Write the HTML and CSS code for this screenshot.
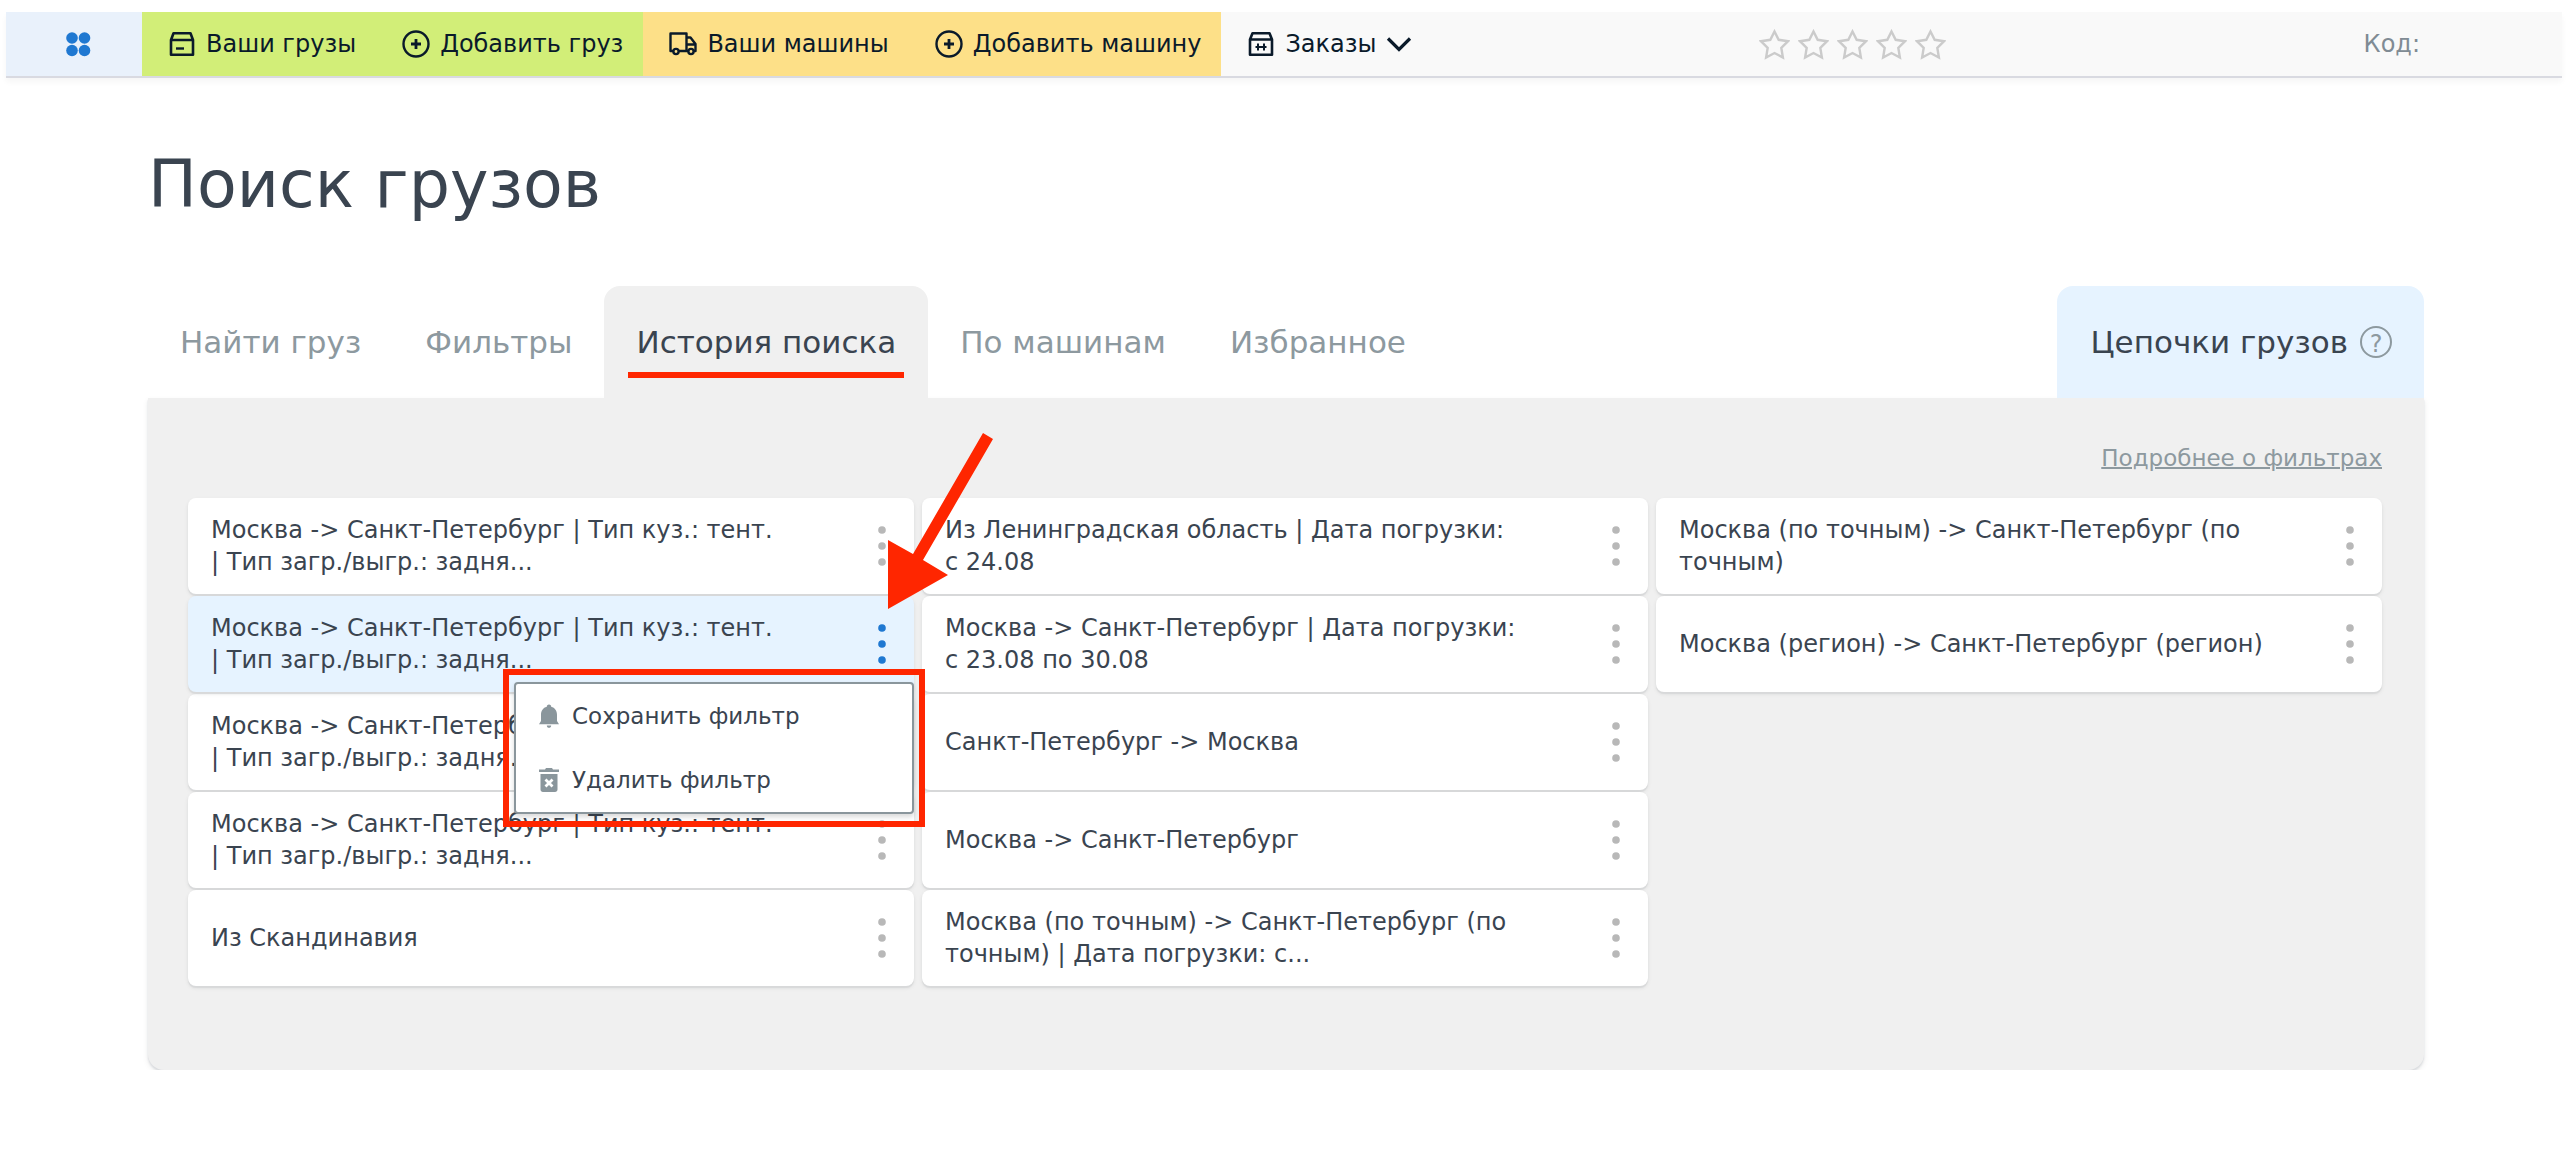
FILE: index.html
```html
<!DOCTYPE html>
<html lang="ru">
<head>
<meta charset="utf-8">
<meta name="viewport" content="width=device-width, initial-scale=1">
<title>Поиск грузов</title>
<link rel="stylesheet" href="styles.css">
</head>
<body>
<svg class="sprite" aria-hidden="true">
  <symbol id="i-plus" viewBox="0 0 28 28"><circle cx="14" cy="14" r="12.5" fill="none" stroke="currentColor" stroke-width="2.4"/><path d="M14 9v10M9 14h10" stroke="currentColor" stroke-width="2.800"/></symbol>
  <symbol id="i-box" viewBox="0 0 28 28"><path d="M3 10 5.500 3.200h17L25 10v14.800H3zM3 10h22" fill="none" stroke="currentColor" stroke-width="2.600" stroke-linejoin="round"/><path d="M8 18.500h8" stroke="currentColor" stroke-width="2.400"/></symbol>
  <symbol id="i-truck" viewBox="0 0 28 28"><path d="M4 21H1.500V3.500H17.500V21h-8M17.500 7.500h4l5 6.500v7H25M17.500 21h2M17.500 14.500h9" fill="none" stroke="currentColor" stroke-width="2.400" stroke-linejoin="round"/><circle cx="7" cy="21.500" r="2.600" fill="none" stroke="currentColor" stroke-width="2.400"/><circle cx="22" cy="21.500" r="2.600" fill="none" stroke="currentColor" stroke-width="2.400"/></symbol>
  <symbol id="i-order" viewBox="0 0 28 28"><path d="M3 9.500 5.500 3.200h17L25 9.500v15.300H3zM3 9.500h22" fill="none" stroke="currentColor" stroke-width="2.600" stroke-linejoin="round"/><path d="M8.500 17h11M11 13.500v7M17 13.500v7" fill="none" stroke="currentColor" stroke-width="2"/></symbol>
  <symbol id="i-star" viewBox="0 0 31 31"><path d="M15.500 2.500 19.700 10.800l9.300 1.400-6.700 6.600 1.600 9.700-8.400-4.500-8.400 4.500 1.600-9.700L2 12.200l9.300-1.400z" fill="none" stroke="#cbcbcb" stroke-width="2.400"/></symbol>
  <symbol id="i-dots" viewBox="0 0 8 40"><circle cx="4" cy="4" r="3.800" fill="currentColor"/><circle cx="4" cy="20" r="3.800" fill="currentColor"/><circle cx="4" cy="36" r="3.800" fill="currentColor"/></symbol>
</svg>

<header class="topbar">
  <a class="apps" href="#" aria-label="Меню"><svg width="26" height="26" viewBox="0 0 26 26" fill="#1f78d1"><circle cx="7" cy="7" r="5.800"/><circle cx="19.500" cy="7" r="5.800"/><circle cx="7" cy="19.500" r="5.800"/><circle cx="19.500" cy="19.500" r="5.800"/></svg></a>
  <nav class="nav nav-green">
    <a href="#"><svg class="icon"><use href="#i-box"/></svg>Ваши грузы</a>
    <a href="#"><svg class="icon"><use href="#i-plus"/></svg>Добавить груз</a>
  </nav>
  <nav class="nav nav-yellow">
    <a href="#"><svg class="icon"><use href="#i-truck"/></svg>Ваши машины</a>
    <a href="#"><svg class="icon"><use href="#i-plus"/></svg>Добавить машину</a>
  </nav>
  <nav class="nav">
    <button type="button"><svg class="icon"><use href="#i-order"/></svg>Заказы<svg class="chevron" viewBox="0 0 26 16"><path d="M2 2.500 13 13.500 24 2.500" fill="none" stroke="currentColor" stroke-width="3.200"/></svg></button>
  </nav>
  <div class="rating" role="img" aria-label="Рейтинг">
    <svg><use href="#i-star"/></svg><svg><use href="#i-star"/></svg><svg><use href="#i-star"/></svg><svg><use href="#i-star"/></svg><svg><use href="#i-star"/></svg>
  </div>
  <span class="code">Код:</span>
</header>

<main class="page">
  <h1>Поиск грузов</h1>
  <nav class="tabs">
    <a href="#">Найти груз</a>
    <a href="#">Фильтры</a>
    <a class="current" href="#">История поиска</a>
    <a href="#">По машинам</a>
    <a href="#">Избранное</a>
    <a class="chains" href="#">Цепочки грузов<span class="help">?</span></a>
  </nav>
  <section class="panel">
    <a class="more" href="#">Подробнее о фильтрах</a>
    <div class="columns">
      <ul>
        <li class="card"><a href="#">Москва -&gt; Санкт-Петербург | Тип куз.: тент. <span class="part">| Тип загр./выгр.: задня...</span></a><button class="dots" type="button" aria-label="Действия"><svg><use href="#i-dots"/></svg></button></li>
        <li class="card active"><a href="#">Москва -&gt; Санкт-Петербург | Тип куз.: тент. <span class="part">| Тип загр./выгр.: задня...</span></a><button class="dots" type="button" aria-label="Действия"><svg><use href="#i-dots"/></svg></button>
          <div class="menu">
            <button type="button"><svg viewBox="0 0 22 26"><path d="M11 1.500c1.500 0 2.200 1 2.200 2.200 3.800 1 5.800 4 5.800 8V18l2 3.200H1L3 18v-6.300c0-4 2-7 5.800-8C8.800 2.500 9.500 1.500 11 1.500zM8.800 22.500h4.400c0 1.500-1 2.300-2.200 2.300s-2.200-.8-2.200-2.300z" fill="#8a969c"/></svg>Сохранить фильтр</button>
            <button type="button"><svg viewBox="0 0 22 26"><path d="M1 2.500h6L8 1h6l1 1.500h6V5H1zM2.500 7h17v15.500c0 1.500-1 2.500-2.500 2.500H5c-1.500 0-2.500-1-2.500-2.500z" fill="#8a969c"/><path d="m7.500 12.500 7 7m0-7-7 7" stroke="#fff" stroke-width="2.800"/></svg>Удалить фильтр</button>
            <span class="frame"></span>
          </div>
          <svg class="arrow" viewBox="0 0 105 176"><path d="M0 176V107l25 14L95 0l10 6-70 121 25 15z" fill="#ff2600"/></svg>
        </li>
        <li class="card"><a href="#">Москва -&gt; Санкт-Петербург | Тип куз.: тент. <span class="part">| Тип загр./выгр.: задня...</span></a><button class="dots" type="button" aria-label="Действия"><svg><use href="#i-dots"/></svg></button></li>
        <li class="card"><a href="#">Москва -&gt; Санкт-Петербург | Тип куз.: тент. <span class="part">| Тип загр./выгр.: задня...</span></a><button class="dots" type="button" aria-label="Действия"><svg><use href="#i-dots"/></svg></button></li>
        <li class="card"><a href="#">Из Скандинавия</a><button class="dots" type="button" aria-label="Действия"><svg><use href="#i-dots"/></svg></button></li>
      </ul>
      <ul>
        <li class="card"><a href="#">Из Ленинградская область | Дата погрузки: <span class="part">с 24.08</span></a><button class="dots" type="button" aria-label="Действия"><svg><use href="#i-dots"/></svg></button></li>
        <li class="card"><a href="#">Москва -&gt; Санкт-Петербург | Дата погрузки: <span class="part">с 23.08 по 30.08</span></a><button class="dots" type="button" aria-label="Действия"><svg><use href="#i-dots"/></svg></button></li>
        <li class="card"><a href="#">Санкт-Петербург -&gt; Москва</a><button class="dots" type="button" aria-label="Действия"><svg><use href="#i-dots"/></svg></button></li>
        <li class="card"><a href="#">Москва -&gt; Санкт-Петербург</a><button class="dots" type="button" aria-label="Действия"><svg><use href="#i-dots"/></svg></button></li>
        <li class="card"><a href="#">Москва (по точным) -&gt; Санкт-Петербург (по точным) | Дата погрузки: с...</a><button class="dots" type="button" aria-label="Действия"><svg><use href="#i-dots"/></svg></button></li>
      </ul>
      <ul>
        <li class="card"><a href="#">Москва (по точным) -&gt; Санкт-Петербург (по точным)</a><button class="dots" type="button" aria-label="Действия"><svg><use href="#i-dots"/></svg></button></li>
        <li class="card"><a href="#">Москва (регион) -&gt; Санкт-Петербург (регион)</a><button class="dots" type="button" aria-label="Действия"><svg><use href="#i-dots"/></svg></button></li>
      </ul>
    </div>
  </section>
</main>
</body>
</html>
```
FILE: styles.css
```css
* { box-sizing: border-box; }

body {
  margin: 0;
  background: #fff;
  color: #3a4450;
  font: 24px/32px Verdana, "DejaVu Sans", sans-serif;
}

a { color: inherit; text-decoration: none; }

button {
  margin: 0;
  padding: 0;
  border: 0;
  background: none;
  color: inherit;
  font: inherit;
  cursor: pointer;
}

.sprite { display: none; }

/* Top bar */
.topbar {
  display: flex;
  margin: 12px 6px 0;
  padding-right: 142px;
  border-bottom: 2px solid #d9dae1;
  background: #f9f9f9;
  box-shadow: 0 4px 6px rgba(0, 0, 0, .04);
  color: #0a1a2a;
}

.apps {
  display: flex;
  align-items: center;
  justify-content: center;
  width: 136px;
  padding-left: 8px;
  background: #e9f1fb;
}

.nav { display: flex; }
.nav-green { background: #d2ee78; }
.nav-yellow { background: #fde088; }

.nav a,
.nav button {
  display: flex;
  align-items: center;
  gap: 10px;
  height: 64px;
  padding: 0 20px 0 26px;
  white-space: nowrap;
}

.icon { width: 28px; height: 28px; }
.chevron { width: 26px; height: 16px; }

.rating {
  display: flex;
  align-items: center;
  gap: 8px;
  margin-left: auto;
  margin-right: 418px;
}

.rating svg { width: 31px; height: 31px; }

.code {
  align-self: center;
  color: #808b94;
}

/* Page */
.page { margin: 67px 144px 0 148px; }

h1 {
  margin: 0 0 61px;
  font-size: 65px;
  font-weight: 400;
  line-height: 80px;
}

.tabs {
  display: flex;
  color: #8d999f;
  font-size: 31px;
}

.tabs a {
  position: relative;
  display: flex;
  align-items: center;
  height: 112px;
  padding: 0 32px;
  border-radius: 16px 16px 0 0;
  white-space: nowrap;
}

.tabs .current { background: #f0f0f0; color: #3a4450; }

.tabs .current::after {
  content: "";
  position: absolute;
  right: 24px;
  bottom: 20px;
  left: 24px;
  height: 6px;
  background: #ff2600;
}

.tabs .chains {
  gap: 12px;
  margin-left: auto;
  padding-left: 34px;
  background: #e6f3ff;
  color: #3a4450;
}

.help {
  display: grid;
  place-items: center;
  width: 32px;
  height: 32px;
  border: 2px solid #8d999f;
  border-radius: 50%;
  color: #8d999f;
  font-size: 24px;
}

.panel {
  display: flex;
  flex-direction: column;
  padding: 44px 42px 84px 40px;
  border-radius: 0 0 16px 16px;
  background: #f0f0f0;
  box-shadow: 0 2px 2px #dadcdf, 0 3px 6px rgba(0, 0, 0, .08);
}

.more {
  align-self: flex-end;
  margin-bottom: 24px;
  color: #8d999f;
  font-size: 23px;
  text-decoration: underline;
  text-decoration-thickness: 2px;
}

.columns {
  display: grid;
  grid-template-columns: repeat(3, 1fr);
  align-items: start;
  gap: 8px;
}

.columns ul {
  display: grid;
  gap: 2px;
  margin: 0;
  padding: 0;
  list-style: none;
}

/* Saved search */
.card {
  position: relative;
  display: flex;
  align-items: center;
  justify-content: space-between;
  min-height: 96px;
  padding: 16px 20px 16px 23px;
  border-radius: 8px;
  background: #fff;
  box-shadow: 0 2px 1px #d8d9da, 0 2px 4px rgba(0, 0, 0, .08);
}

.card > a { max-width: 600px; }
.part { white-space: nowrap; }

.dots { display: flex; padding: 0 8px; color: #b8b8b8; }
.dots svg { width: 8px; height: 40px; }

.active { z-index: 2; background: #e6f3ff; }
.active .dots { color: #1f78d1; }

.menu {
  position: absolute;
  top: 86px;
  right: 0;
  left: 326px;
  border: 2px solid #8a969c;
  border-radius: 4px;
  background: #fff;
  box-shadow: 0 3px 5px rgba(0, 0, 0, .15);
}

.menu button {
  display: flex;
  align-items: center;
  gap: 12px;
  width: 100%;
  height: 64px;
  padding: 0 22px;
  font-size: 23px;
}

.menu svg { width: 22px; height: 26px; }

.frame {
  position: absolute;
  inset: -15px -13px;
  border: 6px solid #ff2600;
  pointer-events: none;
}

.arrow {
  position: absolute;
  top: -163px;
  right: -79px;
  width: 105px;
  height: 176px;
  pointer-events: none;
}
```
